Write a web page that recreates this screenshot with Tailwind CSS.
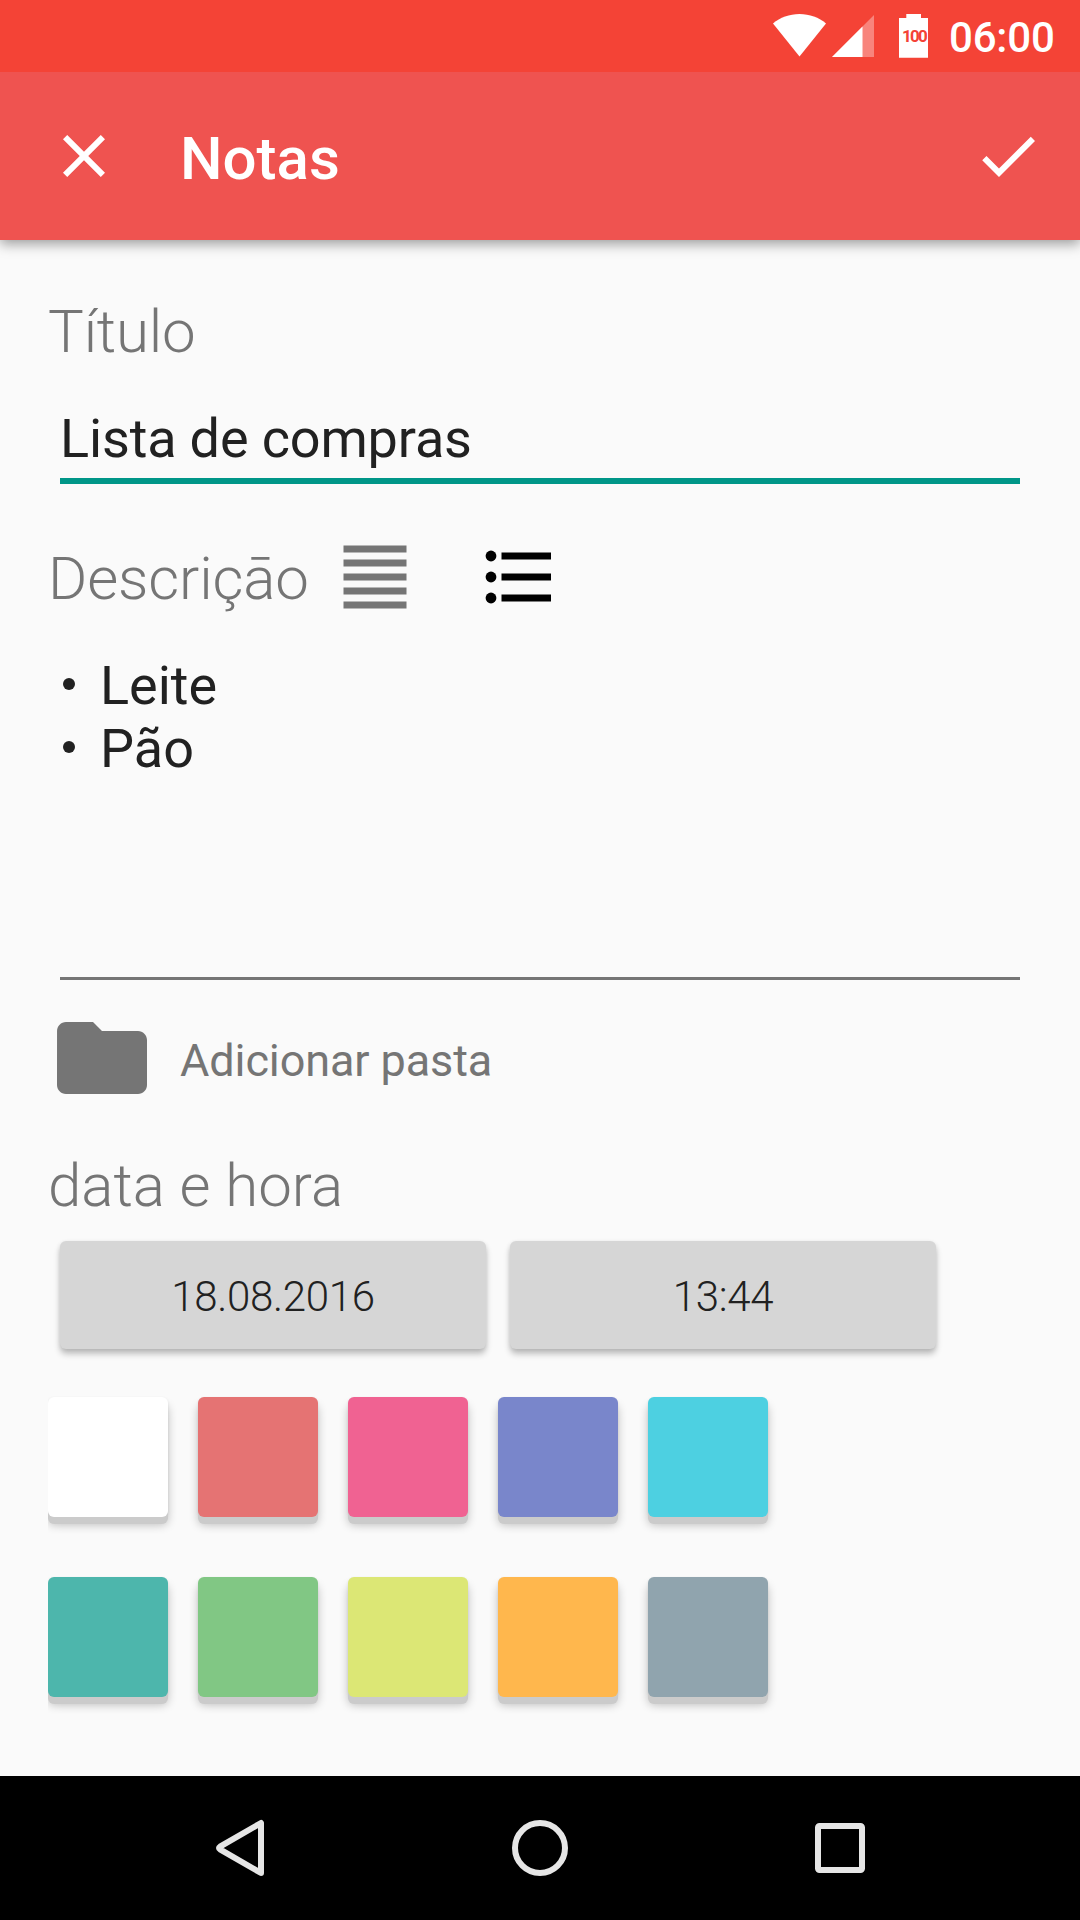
<!DOCTYPE html>
<html lang="pt">
<head>
    <meta charset="UTF-8">
    <meta name="viewport" content="width=device-width, initial-scale=1.0">
    <title>Notas</title>
    <script src="https://cdn.jsdelivr.net/npm/@tailwindcss/browser@4"></script>
</head>
<body class="w-[1080px] h-[1920px] flex flex-col overflow-hidden bg-[#fafafa] font-[Roboto,sans-serif] text-[#212121]">

    <!-- Status bar -->
    <div class="relative z-10 h-[72px] shrink-0 bg-[#f44336] flex justify-end pr-[24px] text-white">
        <svg class="w-[170px] h-[72px] mr-[9px]" viewBox="770 0 170 72" fill="currentColor">
            <path d="M799.500 56.500L773 23.500C780 17.500 789.500 14 799.500 14s19.500 3.500 26.500 9.500z"/>
            <path d="M832 57L874 15V57z" opacity=".35"/>
            <path d="M832 57L862.500 26.500V57z"/>
            <path d="M899 18h7.300v-4h14.700v4h7v39.700h-29z"/>
            <text x="902" y="42" font-size="17" font-weight="700" letter-spacing="-1.700" fill="#f44336">100</text>
        </svg>
        <span class="w-[107px] text-[42px] leading-[76px] tracking-[-0.2px] font-medium">06:00</span>
    </div>

    <!-- App bar -->
    <header class="relative h-[168px] shrink-0 bg-[#ef5350] text-white flex items-center pl-[48px] pr-[36px] shadow-[0_4px_12px_rgba(0,0,0,0.38)]">
        <svg class="size-[72px]" viewBox="0 0 24 24" fill="currentColor">
            <path d="M19 6.410L17.590 5 12 10.590 6.410 5 5 6.410 10.590 12 5 17.590 6.410 19 12 13.410 17.590 19 19 17.590 13.410 12z"/>
        </svg>
        <h1 class="ml-[60px] pt-[5px] text-[60px] leading-[71px] font-medium">Notas</h1>
        <svg class="size-[72px] ml-auto" viewBox="0 0 24 24" fill="currentColor">
            <path d="M9 16.170L4.830 12l-1.420 1.410L9 19 21 7l-1.410-1.410z"/>
        </svg>
    </header>

    <!-- Note form -->
    <main class="grow px-[48px] pt-[56px]">
        <h2 class="text-[60px] leading-[71px] tracking-[-0.2px] font-light text-[#757575]">Título</h2>
        <div class="mt-[40px] mx-[12px] pb-2 border-b-6 border-[#009688] text-[54px] leading-[63px] tracking-[-0.15px]">Lista de compras</div>

        <div class="mt-[50px] h-[84px] flex items-center">
            <h2 class="w-[285px] pt-[5px] text-[60px] leading-[71px] tracking-[-0.15px] font-light text-[#757575]">Descriçāo</h2>
            <svg class="size-[84px]" viewBox="0 0 84 84" fill="#757575">
                <path d="M10.500 11.500h63v7h-63zM10.500 25.500h63v7h-63zM10.500 39.500h63v7h-63zM10.500 53.500h63v7h-63zM10.500 67.500h63v7h-63z"/>
            </svg>
            <svg class="size-[84px] ml-[60px]" viewBox="0 0 84 84" fill="#000">
                <circle cx="14" cy="22" r="5.400"/>
                <circle cx="14" cy="43" r="5.400"/>
                <circle cx="14" cy="64" r="5.400"/>
                <path d="M24.500 18.500h49.500v7h-49.500zM24.500 39.500h49.500v7h-49.500zM24.500 60.500h49.500v7h-49.500z"/>
            </svg>
        </div>

        <ul class="mt-[36px] mx-[12px] h-[326px] border-b-3 border-[#757575] text-[54px] leading-[63px]">
            <li class="flex items-center"><span class="size-3 ml-[3px] mr-[25px] mb-[3px] rounded-full bg-[#212121]"></span>Leite</li>
            <li class="flex items-center"><span class="size-3 ml-[3px] mr-[25px] mb-[3px] rounded-full bg-[#212121]"></span>Pão</li>
        </ul>

        <div class="mt-6 h-[108px] flex items-center text-[#757575]">
            <svg class="size-[108px]" viewBox="0 0 24 24" fill="currentColor">
                <path d="M10 4H4c-1.100 0-1.990.9-1.990 2L2 18c0 1.100.9 2 2 2h16c1.100 0 2-.9 2-2V8c0-1.100-.9-2-2-2h-8l-2-2z"/>
            </svg>
            <span class="ml-6 pt-[5px] text-[45px] leading-[53px] tracking-[-0.1px]">Adicionar pasta</span>
        </div>

        <h2 class="mt-[38px] text-[60px] leading-[71px] font-light text-[#757575]">data e hora</h2>
        <div class="mt-5 ml-3 flex gap-6 text-[42px] leading-[112px] tracking-[-0.3px] font-light">
            <button class="w-[426px] h-[108px] rounded-md bg-[#d6d6d6] shadow-[0_5px_6px_rgba(0,0,0,0.24),0_1px_4px_rgba(0,0,0,0.08)]">18.08.2016</button>
            <button class="w-[426px] h-[108px] rounded-md bg-[#d6d6d6] shadow-[0_5px_6px_rgba(0,0,0,0.24),0_1px_4px_rgba(0,0,0,0.08)]">13:44</button>
        </div>

        <!-- Colour palette -->
        <div class="mt-[38px] pt-[10px] pb-5 overflow-hidden grid grid-cols-[repeat(5,120px)] gap-x-[30px] gap-y-[60px]">
            <button class="h-[120px] rounded-md bg-white shadow-[0_7px_0_#cbcbcb,0_8px_10px_rgba(0,0,0,0.24),0_1px_3px_rgba(0,0,0,0.08)]"></button>
            <button class="h-[120px] rounded-md bg-[#e57373] shadow-[0_7px_0_#cbcbcb,0_8px_10px_rgba(0,0,0,0.24),0_1px_3px_rgba(0,0,0,0.08)]"></button>
            <button class="h-[120px] rounded-md bg-[#f06292] shadow-[0_7px_0_#cbcbcb,0_8px_10px_rgba(0,0,0,0.24),0_1px_3px_rgba(0,0,0,0.08)]"></button>
            <button class="h-[120px] rounded-md bg-[#7986cb] shadow-[0_7px_0_#cbcbcb,0_8px_10px_rgba(0,0,0,0.24),0_1px_3px_rgba(0,0,0,0.08)]"></button>
            <button class="h-[120px] rounded-md bg-[#4dd0e1] shadow-[0_7px_0_#cbcbcb,0_8px_10px_rgba(0,0,0,0.24),0_1px_3px_rgba(0,0,0,0.08)]"></button>
            <button class="h-[120px] rounded-md bg-[#4db6ac] shadow-[0_7px_0_#cbcbcb,0_8px_10px_rgba(0,0,0,0.24),0_1px_3px_rgba(0,0,0,0.08)]"></button>
            <button class="h-[120px] rounded-md bg-[#81c784] shadow-[0_7px_0_#cbcbcb,0_8px_10px_rgba(0,0,0,0.24),0_1px_3px_rgba(0,0,0,0.08)]"></button>
            <button class="h-[120px] rounded-md bg-[#dce775] shadow-[0_7px_0_#cbcbcb,0_8px_10px_rgba(0,0,0,0.24),0_1px_3px_rgba(0,0,0,0.08)]"></button>
            <button class="h-[120px] rounded-md bg-[#ffb74d] shadow-[0_7px_0_#cbcbcb,0_8px_10px_rgba(0,0,0,0.24),0_1px_3px_rgba(0,0,0,0.08)]"></button>
            <button class="h-[120px] rounded-md bg-[#90a4ae] shadow-[0_7px_0_#cbcbcb,0_8px_10px_rgba(0,0,0,0.24),0_1px_3px_rgba(0,0,0,0.08)]"></button>
        </div>
    </main>

    <!-- Navigation bar -->
    <nav class="h-[144px] shrink-0 bg-black flex justify-center gap-[228px]">
        <svg class="w-[72px] h-[144px]" viewBox="0 0 72 144" fill="none" stroke="#e6e6e6" stroke-width="6" stroke-linejoin="round">
            <path d="M57 47V97L16 73.300Q14 72 16 70.700z"/>
        </svg>
        <svg class="w-[72px] h-[144px]" viewBox="0 0 72 144" fill="none" stroke="#e6e6e6" stroke-width="6">
            <circle cx="36" cy="72" r="25"/>
        </svg>
        <svg class="w-[72px] h-[144px]" viewBox="0 0 72 144" fill="none" stroke="#e6e6e6" stroke-width="6">
            <rect x="14" y="50" width="44" height="44" rx="1.500"/>
        </svg>
    </nav>

</body>
</html>
